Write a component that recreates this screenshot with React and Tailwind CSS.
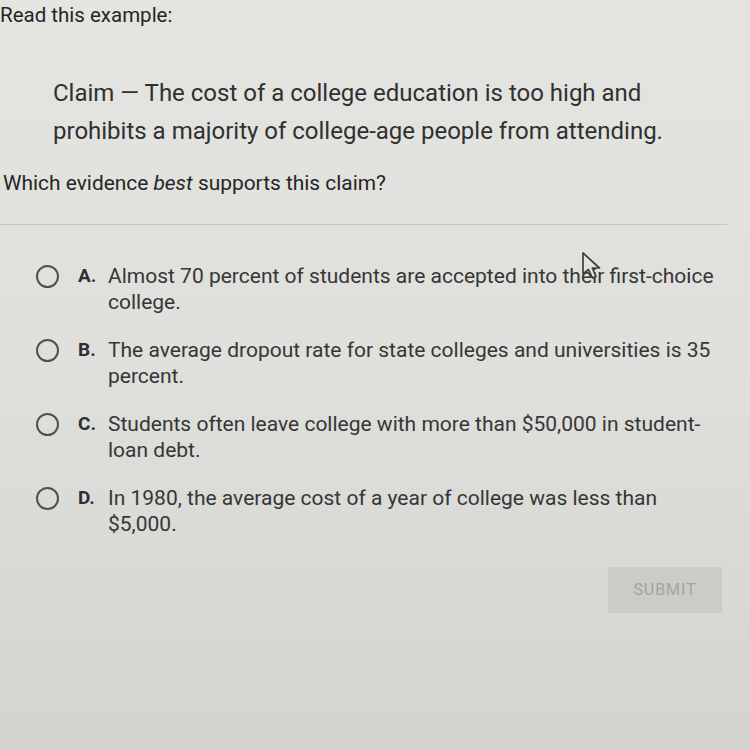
import React from "react";

const options = [
  { letter: "A.", lines: ["Almost 70 percent of students are accepted into their first-choice", "college."] },
  { letter: "B.", lines: ["The average dropout rate for state colleges and universities is 35", "percent."] },
  { letter: "C.", lines: ["Students often leave college with more than $50,000 in student-", "loan debt."] },
  { letter: "D.", lines: ["In 1980, the average cost of a year of college was less than", "$5,000."] },
];

function Radio() {
  return <span className="w-[23px] h-[23px] rounded-full border-[2.5px] border-[#505050] shrink-0 mt-[2px]" />;
}

export default function App() {
  return (
    <div
      className="relative w-[750px] h-[750px] overflow-hidden bg-gradient-to-b from-[#e4e4e1] via-[#dfdfdc] to-[#d3d3cf] text-[#3a3a3a]"
      style={{ fontFamily: "Roboto, 'Liberation Sans', sans-serif" }}
    >
      <div className="pt-[1px] text-[20.5px] leading-[28px] text-[#262626]">Read this example:</div>

      <div className="pl-[53px] pt-[45px] text-[24px] leading-[38px] text-[#303030]">
        <div>Claim — The cost of a college education is too high and</div>
        <div>prohibits a majority of college-age people from attending.</div>
      </div>

      <div className="pl-[3px] pt-[19px] text-[20.9px] leading-[28px] text-[#262626]">
        Which evidence <i>best</i> supports this claim?
      </div>

      <div className="mt-[27px] w-[727px] h-px bg-[#c6c6c2]" />

      <div className="flex flex-col gap-[22px] pt-[38px] pl-[36px]">
        {options.map((o) => (
          <div key={o.letter} className="flex items-start">
            <Radio />
            <span className="w-[25px] ml-[19px] font-bold text-[19px] leading-[26px] text-[#2e2e2e]">{o.letter}</span>
            <div className="ml-[5px] text-[21px] leading-[26px] text-[#363636]">
              {o.lines.map((l) => (
                <div key={l}>{l}</div>
              ))}
            </div>
          </div>
        ))}
      </div>

      <div className="flex justify-end pr-[28px] mt-[30px]">
        <button className="w-[114px] h-[46px] bg-[#cbcbc8] text-[#a3a3a0] text-[16px] tracking-[0.06em]">SUBMIT</button>
      </div>

      <svg className="absolute left-[580px] top-[251px]" width="28" height="30" viewBox="0 0 28 30">
        <path d="M3 2 L3 23 L8.5 18.5 L12.5 27 L16 25.3 L12.3 17 L19.5 17 Z" fill="#e2e2df" stroke="#3e3e3e" strokeWidth="1.7" strokeLinejoin="round" />
      </svg>
    </div>
  );
}
